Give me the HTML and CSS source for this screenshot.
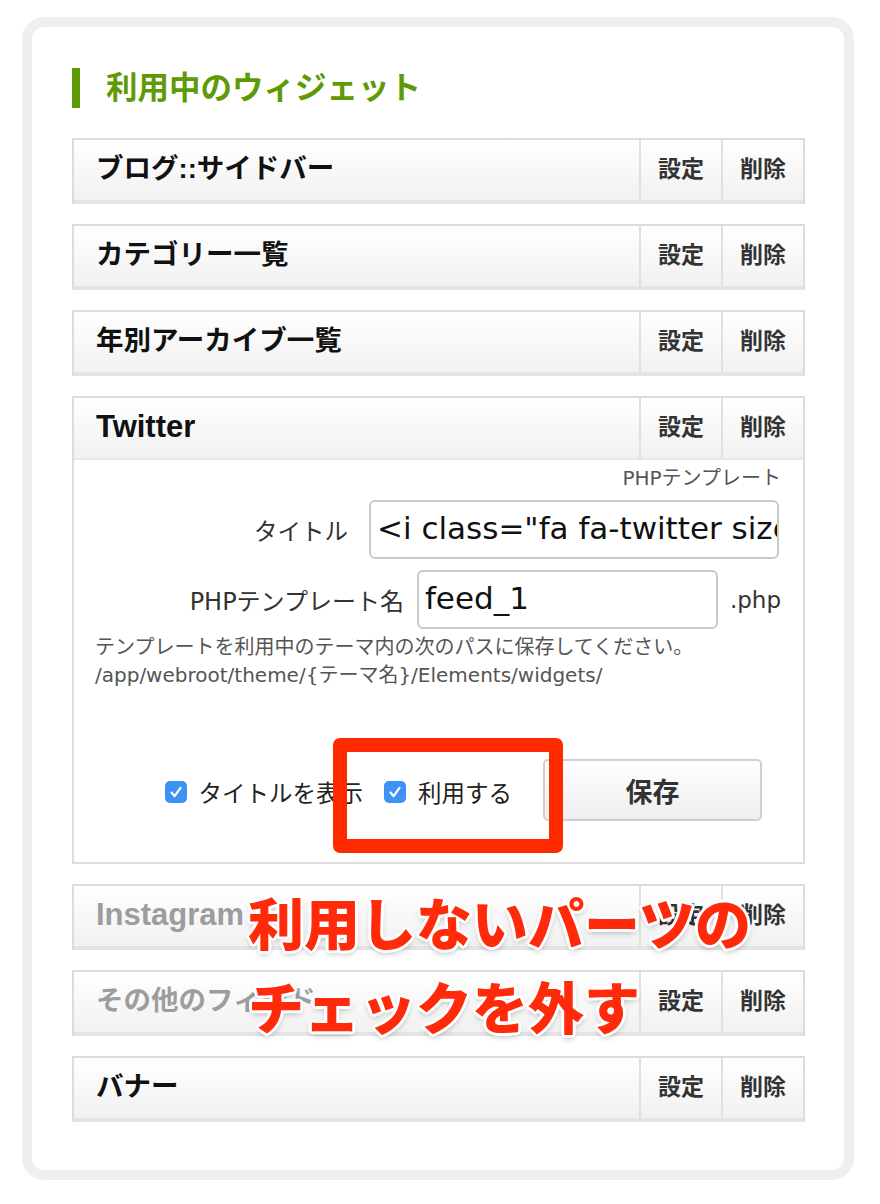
FILE: index.html
```html
<!DOCTYPE html>
<html lang="ja">
<head>
<meta charset="utf-8">
<title>利用中のウィジェット</title>
<link rel="stylesheet" href="styles.css">
</head>
<body>
<div class="frame">
  <h2 class="heading">利用中のウィジェット</h2>
  <div class="widgets">
    <div class="widget">
      <div class="w-head"><div class="w-title">ブログ::サイドバー</div><div class="w-btn">設定</div><div class="w-btn">削除</div></div>
    </div>
    <div class="widget">
      <div class="w-head"><div class="w-title">カテゴリー一覧</div><div class="w-btn">設定</div><div class="w-btn">削除</div></div>
    </div>
    <div class="widget">
      <div class="w-head"><div class="w-title">年別アーカイブ一覧</div><div class="w-btn">設定</div><div class="w-btn">削除</div></div>
    </div>
    <div class="widget open">
      <div class="w-head"><div class="w-title latin">Twitter</div><div class="w-btn">設定</div><div class="w-btn">削除</div></div>
      <div class="w-body">
        <div class="type">PHPテンプレート</div>
        <div class="field f-title">
          <label class="f-label">タイトル</label>
          <div class="input wide">&lt;i class="fa fa-twitter size-x"&gt;&lt;/i&gt; Twitter</div>
        </div>
        <div class="field f-tpl">
          <label class="f-label">PHPテンプレート名</label>
          <div class="input mid">feed_1</div>
          <span class="ext">.php</span>
        </div>
        <p class="help">テンプレートを利用中のテーマ内の次のパスに保存してください。<br>/app/webroot/theme/{テーマ名}/Elements/widgets/</p>
        <div class="actions">
          <span class="check"><span class="box"><svg viewBox="0 0 22 22" width="22" height="22"><path d="M6.5 11.5 L9.6 15.2 L15.5 6.8" fill="none" stroke="#fff" stroke-width="2.2" stroke-linecap="round" stroke-linejoin="round"/></svg></span><span class="c-label">タイトルを表示</span></span>
          <span class="check c2"><span class="box"><svg viewBox="0 0 22 22" width="22" height="22"><path d="M6.5 11.5 L9.6 15.2 L15.5 6.8" fill="none" stroke="#fff" stroke-width="2.2" stroke-linecap="round" stroke-linejoin="round"/></svg></span><span class="c-label">利用する</span></span>
          <button class="save">保存</button>
        </div>
      </div>
    </div>
    <div class="widget disabled">
      <div class="w-head"><div class="w-title latin">Instagram</div><div class="w-btn">設定</div><div class="w-btn">削除</div></div>
    </div>
    <div class="widget disabled">
      <div class="w-head"><div class="w-title">その他のフィード</div><div class="w-btn">設定</div><div class="w-btn">削除</div></div>
    </div>
    <div class="widget">
      <div class="w-head"><div class="w-title">バナー</div><div class="w-btn">設定</div><div class="w-btn">削除</div></div>
    </div>
  </div>
  <div class="highlight"></div>
  <div class="callout">利用しないパーツの<br>チェックを外す</div>
</div>
</body>
</html>
```

FILE: styles.css
```css
* { box-sizing: border-box; }
html, body { margin: 0; padding: 0; background: #fff; }
body {
  font-family: "Liberation Sans", "Noto Sans CJK JP", sans-serif;
  color: #222;
}
.frame {
  position: relative;
  margin: 17px 0 0 22px;
  width: 832px;
  height: 1163px;
  border: 10px solid #efefef;
  border-radius: 22px;
  padding: 41px 39px 0 40px;
}
.heading {
  margin: 0;
  height: 40px;
  border-left: 8px solid #5e9a05;
  padding-left: 26px;
  font-size: 31.5px;
  line-height: 40px;
  font-weight: 700;
  color: #5e9a05;
}
.widgets {
  margin-top: 30px;
  display: flex;
  flex-direction: column;
  gap: 20px;
}
.widget {
  border: 2px solid #dcdcdc;
  border-bottom: 0;
  background: #fff;
}
.w-head {
  display: flex;
  height: 64px;
  border-bottom: 4px solid #e4e4e4;
  background: linear-gradient(#ffffff, #f1f1f1);
}
.w-title {
  flex: 1;
  padding-left: 22px;
  font-size: 27.5px;
  font-weight: 700;
  line-height: 58px;
  color: #111;
}
.w-title.latin { font-size: 31px; }
.w-btn {
  width: 82px;
  border-left: 2px solid #e0e0e0;
  text-align: center;
  font-size: 23px;
  font-weight: 700;
  line-height: 58px;
  color: #333;
}
.disabled .w-title { color: #9d9d9d; }
.open .w-head { height: 62px; border-bottom: 2px solid #e8e8e8; }
.open .w-body { border-bottom: 2px solid #dcdcdc; }
.w-body {
  height: 404px;
  padding: 6px 22px 0 21px;
  font-family: "DejaVu Sans", "Noto Sans CJK JP", sans-serif;
}
.type {
  text-align: right;
  font-size: 20px;
  line-height: 24px;
  color: #555;
}
.field {
  display: flex;
  align-items: center;
  justify-content: flex-end;
}
.f-title { margin-top: 10px; padding-right: 2px; }
.f-tpl { margin-top: 11px; padding-right: 0; }
.f-label {
  font-size: 23.5px;
  color: #333;
}
.f-tpl .f-label { font-size: 24px; }
.f-title .f-label { margin-right: 21px; }
.f-tpl .f-label { margin-right: 13px; }
.input {
  height: 59px;
  border: 2px solid #c9c9c9;
  border-radius: 6px;
  background: #fff;
  font-size: 31px;
  line-height: 53px;
  color: #111;
  padding: 0 6px;
  white-space: nowrap;
  overflow: hidden;
}
.wide { width: 410px; }
.mid { width: 301px; }
.ext {
  margin-left: 12px;
  font-size: 23px;
  color: #333;
}
.help {
  margin: 4px 0 0;
  font-size: 20px;
  line-height: 28px;
  color: #555;
}
.actions {
  margin-top: 70px;
  display: flex;
  align-items: center;
  justify-content: flex-end;
  height: 62px;
  padding-right: 19px;
  font-family: "Liberation Sans", "Noto Sans CJK JP", sans-serif;
}
.check {
  display: flex;
  align-items: center;
  margin-top: 4px;
}
.c2 { margin-left: 21px; }
.box {
  width: 22px;
  height: 22px;
  border-radius: 5px;
  background: #3c93f5;
  display: block;
}
.box svg { display: block; }
.c-label {
  margin-left: 12px;
  font-size: 23.5px;
  color: #222;
}
.save {
  margin-left: 31px;
  width: 219px;
  height: 62px;
  border: 2px solid #cfcfcf;
  border-radius: 5px;
  background: linear-gradient(#ffffff, #eeeeee);
  font-family: "Liberation Sans", "Noto Sans CJK JP", sans-serif;
  font-size: 27px;
  font-weight: 700;
  color: #333;
}
.highlight {
  position: absolute;
  left: 301px;
  top: 711px;
  width: 230px;
  height: 115px;
  border: 14px solid #ff2a00;
  border-radius: 7px;
}
.callout {
  position: absolute;
  left: 216px;
  top: 857px;
  font-size: 56px;
  line-height: 84px;
  font-weight: 800;
  color: #ff2a0a;
  white-space: nowrap;
  text-shadow:
    3px 0 0 #fff, -3px 0 0 #fff, 0 3px 0 #fff, 0 -3px 0 #fff,
    2px 2px 0 #fff, -2px 2px 0 #fff, 2px -2px 0 #fff, -2px -2px 0 #fff,
    0 3px 6px rgba(0,0,0,0.35);
}
```
